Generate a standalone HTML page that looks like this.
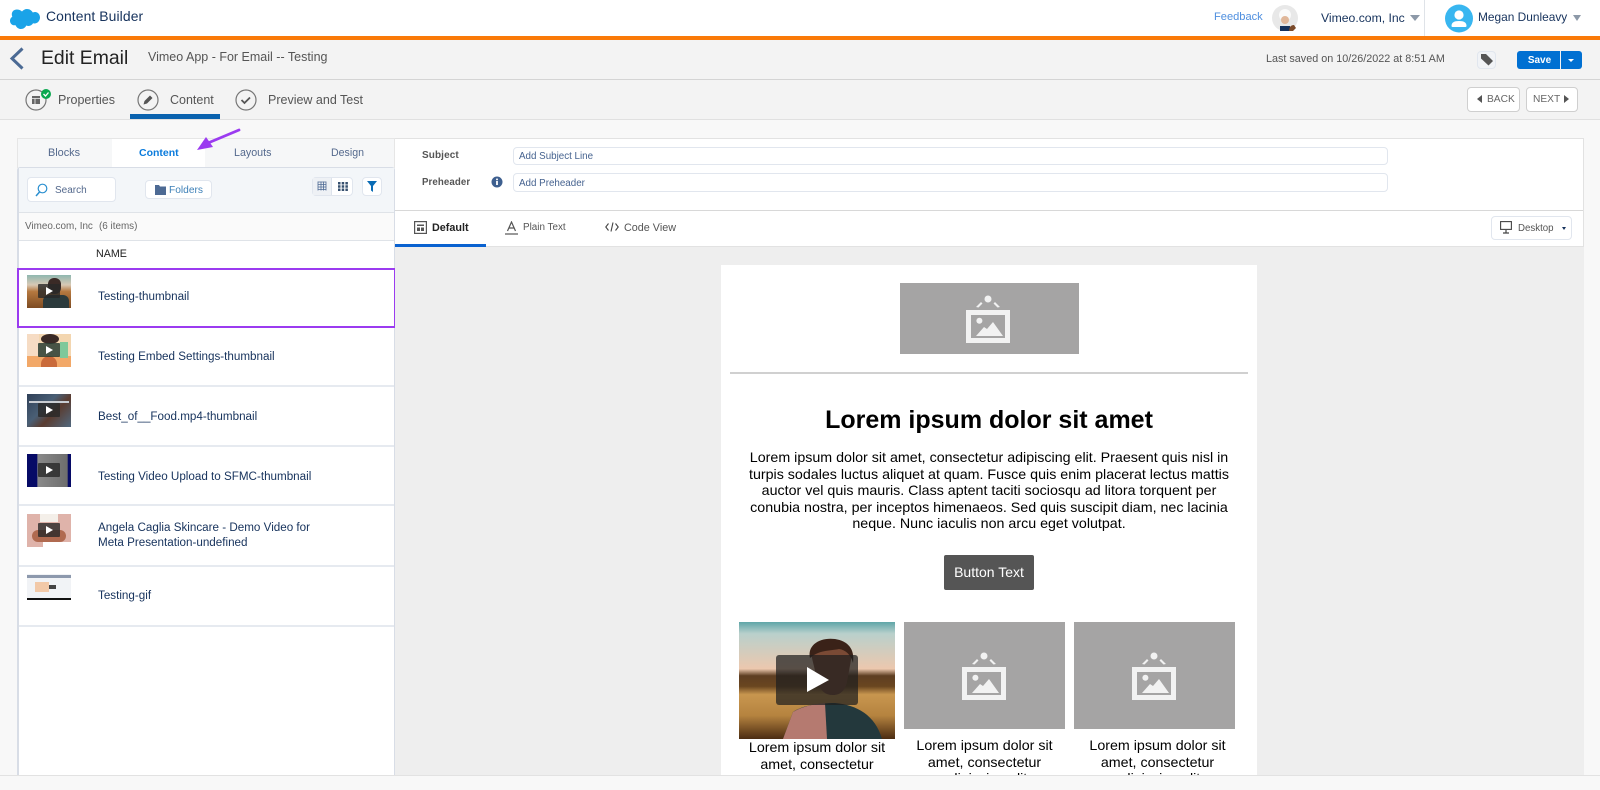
<!DOCTYPE html>
<html><head><meta charset="utf-8"><title>Edit Email</title>
<style>
*{box-sizing:border-box}
html,body{margin:0;padding:0;width:1600px;height:790px;overflow:hidden;background:#f8f8f8;font-family:"Liberation Sans",sans-serif}
#w{position:absolute;left:0;top:0;width:1600px;height:790px;overflow:hidden;filter:blur(.35px)}
.a{position:absolute}
.t{position:absolute;white-space:nowrap;line-height:1}
.btn{position:absolute;background:#fff;border:1px solid #e1e6ee;border-radius:4px}
.row{position:absolute;left:19px;width:375px;border-bottom:2px solid #e6eaf0;background:#fff}
.th{position:absolute;left:27px;width:44px;height:33px;overflow:hidden}
.pl{position:absolute;left:11px;top:9px;width:22px;height:14px;background:rgba(40,40,40,.8);border-radius:1px}
.pl:after{content:"";position:absolute;left:8px;top:3px;border-left:7px solid #fff;border-top:4px solid transparent;border-bottom:4px solid transparent}
.n{position:absolute;left:98px;color:#16325c;font-size:11.650px;line-height:15px;white-space:nowrap}
.ph{position:absolute;background:#a5a4a4}
.c{position:absolute;text-align:center;color:#000;font-size:14.250px;line-height:16.500px}
</style></head><body><div id="w">

<!-- top bar -->
<div class="a" style="left:0;top:0;width:1600px;height:36px;background:#fff"></div>
<div class="a" style="left:0;top:36px;width:1600px;height:4px;background:#fa7a08"></div>
<svg class="a" style="left:10px;top:8px" width="30" height="22" viewBox="0 0 30 22"><path fill="#1aa3e8" d="M12 3.500C13.200 2 15 1 17 1c2.500 0 4.700 1.400 5.800 3.500 1-.4 1.900-.6 2.700-.5 2.700.3 4.500 2.800 4.500 5.500 0 3.200-2.500 6-5.600 6-.5 0-1 0-1.400-.2-.9 1.600-2.600 2.700-4.500 2.700-.8 0-1.500-.2-2.200-.5-.9 2.100-3 3.500-5.300 3.500-2.500 0-4.600-1.600-5.400-3.800-.4.1-.8.100-1.200.1C1.800 17.300 0 15.200 0 12.700c0-1.700.9-3.200 2.300-4C1.900 7.900 1.800 7 1.800 6.300 1.800 3.400 4.100 1.500 6.800 1.500c2 0 3.900.8 5.200 2z"/></svg>
<div class="t" style="left:46px;top:10px;font-size:13.900px;color:#16325c;letter-spacing:.1px">Content Builder</div>
<div class="t" style="left:1214px;top:12px;font-size:11.100px;color:#4f8fdf">Feedback</div>
<svg class="a" style="left:1272px;top:5px" width="26" height="27" viewBox="0 0 26 27"><circle cx="13" cy="13" r="13" fill="#e8e8e8"/><circle cx="13" cy="10" r="6" fill="#fafafa"/><circle cx="13" cy="15" r="4" fill="#e0b79a"/><path d="M8 26v-5h10v5z" fill="#16325c"/><path d="M17 26c0-4 2-6 5-6l2 3-3 3z" fill="#7a4a2a"/></svg>
<div class="t" style="left:1321px;top:12px;font-size:12.200px;color:#16325c">Vimeo.com, Inc</div>
<div class="a" style="left:1410px;top:15px;border-top:6px solid #8d99a8;border-left:5px solid transparent;border-right:5px solid transparent"></div>
<div class="a" style="left:1424px;top:0;width:1px;height:36px;background:#dfe3e8"></div>
<svg class="a" style="left:1445px;top:4px" width="28" height="29" viewBox="0 0 28 29"><circle cx="14" cy="14.500" r="14" fill="#38b6f0"/><circle cx="14" cy="11" r="4.600" fill="#fff"/><path d="M6.500 22c0-3.500 2.500-5 7.500-5s7.500 1.500 7.500 5c0 .5-.5 1-1 1h-13c-.5 0-1-.5-1-1z" fill="#fff"/></svg>
<div class="t" style="left:1478px;top:12px;font-size:11.900px;color:#16325c">Megan Dunleavy</div>
<div class="a" style="left:1573px;top:15px;border-top:6px solid #8d99a8;border-left:4.500px solid transparent;border-right:4.500px solid transparent"></div>

<!-- edit header -->
<div class="a" style="left:0;top:40px;width:1600px;height:80px;background:#f3f3f3"></div>
<div class="a" style="left:0;top:79px;width:1600px;height:1px;background:#d4d4d4"></div>
<div class="a" style="left:0;top:119px;width:1600px;height:1px;background:#e0e0e0"></div>
<svg class="a" style="left:9px;top:46px" width="16" height="25" viewBox="0 0 16 25"><path d="M13.500 2.500 3 12.500l10.500 10" fill="none" stroke="#4b6a94" stroke-width="3"/></svg>
<div class="t" style="left:41px;top:49px;font-size:19.400px;color:#222">Edit Email</div>
<div class="t" style="left:148px;top:51px;font-size:12.500px;color:#555">Vimeo App - For Email -- Testing</div>
<div class="t" style="left:1266px;top:54px;font-size:10.800px;color:#555">Last saved on 10/26/2022 at 8:51 AM</div>
<div class="btn" style="left:1477px;top:51px;width:19px;height:18px;background:#f1f3f6"></div>
<svg class="a" style="left:1480px;top:53px" width="14" height="13" viewBox="0 0 14 13"><path d="M1 1h5l7 7-4.500 4.500L1 5.500z" fill="#555"/></svg>
<div class="a" style="left:1517px;top:51px;width:43px;height:18px;background:#0070d2;border-radius:3px 0 0 3px;color:#fff;font-size:10px;font-weight:bold;line-height:20px;text-align:center;padding-left:2px">Save</div>
<div class="a" style="left:1561px;top:51px;width:21px;height:18px;background:#0070d2;border-radius:0 3px 3px 0"></div>
<div class="a" style="left:1568px;top:59px;border-top:3px solid #fff;border-left:3px solid transparent;border-right:3px solid transparent"></div>

<!-- step tabs -->
<svg class="a" style="left:25px;top:88px" width="28" height="24" viewBox="0 0 28 24"><circle cx="11" cy="12" r="10" fill="#f3f3f3" stroke="#777" stroke-width="1.200"/><rect x="7" y="8" width="8" height="8" fill="#666"/><path d="M7 10.500h8M10 10.500V16" stroke="#f3f3f3" stroke-width=".8"/><circle cx="21" cy="6" r="5" fill="#0aa84f"/><path d="M18.500 6l2 2 3-3.500" fill="none" stroke="#fff" stroke-width="1.300"/></svg>
<div class="t" style="left:58px;top:94px;font-size:12.500px;color:#555">Properties</div>
<svg class="a" style="left:137px;top:89px" width="22" height="22" viewBox="0 0 22 22"><circle cx="11" cy="11" r="10" fill="none" stroke="#777" stroke-width="1.200"/><path d="M6.500 15.500l1-3.500 5.500-5.500 2.500 2.500-5.500 5.500z" fill="#555"/></svg>
<div class="t" style="left:170px;top:94px;font-size:12.500px;color:#555">Content</div>
<div class="a" style="left:130px;top:114px;width:90px;height:5px;background:#0a62ae"></div>
<svg class="a" style="left:235px;top:89px" width="22" height="22" viewBox="0 0 22 22"><circle cx="11" cy="11" r="10" fill="none" stroke="#777" stroke-width="1.200"/><path d="M6.500 11l3 3 5.500-5.500" fill="none" stroke="#555" stroke-width="1.800"/></svg>
<div class="t" style="left:268px;top:94px;font-size:12.500px;color:#555">Preview and Test</div>
<div class="btn" style="left:1467px;top:87px;width:53px;height:25px;border-color:#cfcfcf;background:#fff"></div>
<div class="a" style="left:1477px;top:95px;border-right:5px solid #555;border-top:4px solid transparent;border-bottom:4px solid transparent"></div>
<div class="t" style="left:1487px;top:95px;font-size:10.200px;color:#666">BACK</div>
<div class="btn" style="left:1526px;top:87px;width:52px;height:25px;border-color:#cfcfcf;background:#fff"></div>
<div class="t" style="left:1533px;top:95px;font-size:10.200px;color:#666">NEXT</div>
<div class="a" style="left:1564px;top:95px;border-left:5px solid #555;border-top:4px solid transparent;border-bottom:4px solid transparent"></div>

<!-- left panel tabs -->
<div class="a" style="left:17px;top:138px;width:378px;height:30px;background:#f6f7f8;border:1px solid #e6e6e6;border-bottom:0"></div>
<div class="a" style="left:112px;top:139px;width:93px;height:29px;background:#fff"></div>
<div class="t" style="left:48px;top:148px;font-size:10.900px;color:#54698d">Blocks</div>
<div class="t" style="left:139px;top:148px;font-size:10.500px;font-weight:bold;color:#0a7bdc">Content</div>
<div class="t" style="left:234px;top:148px;font-size:10.700px;color:#54698d">Layouts</div>
<div class="t" style="left:331px;top:148px;font-size:10.600px;color:#54698d">Design</div>

<!-- left panel -->
<div class="a" style="left:17px;top:167px;width:378px;height:608px;background:#fff;border:1px solid #d8dde6;border-left-width:2px;border-bottom:0;border-radius:3px 3px 0 0"></div>
<div class="a" style="left:19px;top:168px;width:375px;height:44px;background:#f3f6f9"></div>
<div class="a" style="left:19px;top:212px;width:375px;height:29px;background:#fafafa;border-top:1px solid #dfe3e8;border-bottom:1px solid #dfe3e8"></div>
<div class="btn" style="left:27px;top:177px;width:89px;height:25px"></div>
<svg class="a" style="left:35px;top:183px" width="13" height="14" viewBox="0 0 13 14"><circle cx="7.500" cy="5.500" r="4.300" fill="none" stroke="#2a8fd0" stroke-width="1.200"/><path d="M4.500 9 1 13" stroke="#2a8fd0" stroke-width="1.500"/></svg>
<div class="t" style="left:55px;top:186px;font-size:10px;color:#54698d">Search</div>
<div class="btn" style="left:145px;top:180px;width:67px;height:19px"></div>
<svg class="a" style="left:155px;top:184px" width="11" height="11" viewBox="0 0 11 11"><path d="M0 1h4l1 1.500h6V11H0z" fill="#4d6a94"/></svg>
<div class="t" style="left:169px;top:186px;font-size:10.200px;color:#3d80b8">Folders</div>
<div class="btn" style="left:312px;top:177px;width:41px;height:19px"></div>
<div class="a" style="left:313px;top:178px;width:19px;height:17px;background:#eef1f5;border-right:1px solid #dde3ec"></div>
<svg class="a" style="left:317px;top:181px" width="10" height="11" viewBox="0 0 10 11"><path d="M1 1h8M1 3.500h8M1 6h8M1 8.500h8M1 0.500v9M4 .5v9M6.500 .5v9M9 .5v9" stroke="#4d6a94" stroke-width=".8" fill="none"/></svg>
<svg class="a" style="left:338px;top:182px" width="10" height="9" viewBox="0 0 10 9"><path d="M0 0h2.500v2.500H0zM3.700 0h2.500v2.500H3.700zM7.400 0h2.500v2.500H7.400zM0 3.300h2.500v2.500H0zM3.700 3.300h2.500v2.500H3.700zM7.400 3.300h2.500v2.500H7.400zM0 6.500h2.500V9H0zM3.700 6.500h2.500V9H3.700zM7.400 6.500h2.500V9H7.400z" fill="#37506f"/></svg>
<div class="btn" style="left:362px;top:177px;width:20px;height:19px"></div>
<svg class="a" style="left:367px;top:181px" width="10" height="11" viewBox="0 0 10 11"><path d="M0 0h10L6 5v6L4 9.500V5z" fill="#0a6cb5"/></svg>
<div class="t" style="left:25px;top:222px;font-size:9.900px;color:#666">Vimeo.com, Inc</div>
<div class="t" style="left:99px;top:222px;font-size:9.900px;color:#666">(6 items)</div>
<div class="t" style="left:96px;top:249px;font-size:10.700px;color:#222">NAME</div>

<!-- rows -->
<div class="row" style="top:327px;height:60px"></div>
<div class="row" style="top:387px;height:60px"></div>
<div class="row" style="top:447px;height:59px"></div>
<div class="row" style="top:506px;height:61px"></div>
<div class="row" style="top:567px;height:60px"></div>
<div class="a" style="left:17px;top:268px;width:379px;height:60px;border:2.500px solid #9b3bf0;background:#fff"></div>

<div class="th" style="top:275px;background:linear-gradient(180deg,#8fb7b0 0,#d8c8b4 30%,#b5783f 50%,#7d4b22 100%)"><div class="a" style="left:21px;top:3px;width:13px;height:16px;background:#3a2a26;border-radius:6px"></div><div class="a" style="left:16px;top:20px;width:26px;height:13px;background:#2b3a3c;border-radius:6px 6px 0 0"></div><div class="pl"></div></div>
<div class="n" style="top:289px">Testing-thumbnail</div>

<div class="th" style="top:334px;background:#f3d6b0"><div class="a" style="left:0;top:0;width:12px;height:33px;background:#f6dcc4"></div><div class="a" style="left:0;top:22px;width:44px;height:11px;background:#f2a868"></div><div class="a" style="left:33px;top:8px;width:8px;height:16px;background:#7fc89a"></div><div class="a" style="left:14px;top:0;width:18px;height:10px;background:#3a2a26;border-radius:50%"></div><div class="a" style="left:14px;top:22px;width:16px;height:11px;background:#c96a3a;border-radius:8px 8px 0 0"></div><div class="pl" style="background:rgba(40,60,50,.85)"></div></div>
<div class="n" style="top:349px">Testing Embed Settings-thumbnail</div>

<div class="th" style="top:394px;background:linear-gradient(135deg,#2f4058,#4a5f75 40%,#5a3c30 60%,#51697f)"><div class="a" style="left:2px;top:7px;width:40px;height:2px;background:#c8ccd2"></div><div class="pl"></div></div>
<div class="n" style="top:409px">Best_of__Food.mp4-thumbnail</div>

<div class="th" style="top:454px;background:linear-gradient(90deg,#060a66 0,#060a66 23%,#8a8a8a 24%,#6d6d6d 92%,#060a66 93%)"><div class="pl"></div></div>
<div class="n" style="top:469px">Testing Video Upload to SFMC-thumbnail</div>

<div class="th" style="top:514px;background:#dfb3aa"><div class="a" style="left:13px;top:0;width:18px;height:8px;background:#f4efe9"></div><div class="a" style="left:5px;top:16px;width:34px;height:12px;background:#b06a50;border-radius:6px"></div><div class="a" style="left:16px;top:28px;width:28px;height:5px;background:#fff"></div><div class="pl"></div></div>
<div class="n" style="top:520px">Angela Caglia Skincare - Demo Video for<br>Meta Presentation-undefined</div>

<div class="th" style="top:574px;height:26px;background:#f1f3f6"><div class="a" style="left:0;top:1px;width:44px;height:3px;background:#8d99ad"></div><div class="a" style="left:8px;top:8px;width:14px;height:10px;background:#f2c9a8"></div><div class="a" style="left:22px;top:11px;width:7px;height:4px;background:#444"></div><div class="a" style="left:0;top:24px;width:44px;height:2px;background:#111"></div></div>
<div class="n" style="top:588px">Testing-gif</div>

<!-- right panel -->
<div class="a" style="left:395px;top:138px;width:1189px;height:109px;background:#fff;border:1px solid #e2e2e2;border-left:0"></div>
<div class="t" style="left:422px;top:151px;font-size:10px;font-weight:bold;color:#555;letter-spacing:.1px">Subject</div>
<div class="btn" style="left:513px;top:147px;width:875px;height:18px"></div>
<div class="t" style="left:519px;top:152px;font-size:9.800px;color:#45628f">Add Subject Line</div>
<div class="t" style="left:422px;top:178px;font-size:9.700px;font-weight:bold;color:#555;letter-spacing:.1px">Preheader</div>
<svg class="a" style="left:491px;top:176px" width="12" height="12" viewBox="0 0 12 12"><circle cx="6" cy="6" r="5.500" fill="#3e5f8f"/><rect x="5.100" y="5" width="1.800" height="4" fill="#fff"/><rect x="5.100" y="2.600" width="1.800" height="1.600" fill="#fff"/></svg>
<div class="btn" style="left:513px;top:173px;width:875px;height:19px"></div>
<div class="t" style="left:519px;top:179px;font-size:9.800px;color:#45628f">Add Preheader</div>
<div class="a" style="left:395px;top:210px;width:1188px;height:1px;background:#d8d8d8"></div>

<svg class="a" style="left:414px;top:221px" width="13" height="13" viewBox="0 0 13 13"><rect x=".6" y=".6" width="11.800" height="11.800" fill="none" stroke="#555" stroke-width="1.200"/><path d="M3 3.500h7V5H3zM3 6.500h3v3.500H3zM7 6.500h3v3.500H7z" fill="#555"/></svg>
<div class="t" style="left:432px;top:223px;font-size:10.800px;font-weight:bold;color:#222">Default</div>
<div class="a" style="left:395px;top:244px;width:91px;height:3px;background:#0a62d0"></div>
<svg class="a" style="left:505px;top:221px" width="13" height="14" viewBox="0 0 13 14"><path d="M2.500 10 6.500 1l4 9M4 7h5" fill="none" stroke="#555" stroke-width="1.200"/><path d="M0 13h13" stroke="#555" stroke-width="1.200"/></svg>
<div class="t" style="left:523px;top:223px;font-size:9.900px;color:#555">Plain Text</div>
<svg class="a" style="left:605px;top:222px" width="14" height="10" viewBox="0 0 14 10"><path d="M3.500 1.500 .8 5l2.700 3.500M10.500 1.500 13.200 5l-2.700 3.500M8 .5 6 9.500" fill="none" stroke="#444" stroke-width="1.100"/></svg>
<div class="t" style="left:624px;top:223px;font-size:10.800px;color:#555">Code View</div>
<div class="btn" style="left:1491px;top:216px;width:81px;height:24px"></div>
<svg class="a" style="left:1500px;top:221px" width="12" height="13" viewBox="0 0 12 13"><rect x=".6" y=".6" width="10.800" height="7.800" fill="none" stroke="#444" stroke-width="1.100"/><path d="M6 9v2.500M3 12h6" stroke="#444" stroke-width="1.200"/></svg>
<div class="t" style="left:1518px;top:224px;font-size:9.700px;color:#555">Desktop</div>
<div class="a" style="left:1562px;top:227px;border-top:3px solid #16325c;border-left:2.500px solid transparent;border-right:2.500px solid transparent"></div>

<!-- canvas -->
<div class="a" style="left:395px;top:247px;width:1189px;height:528px;background:#eee;overflow:hidden">
<div class="a" style="left:326px;top:18px;width:536px;height:510px;background:#fff"></div>
<div class="a" style="left:-395px;top:-247px;width:1600px;height:790px">
 <div class="ph" style="left:900px;top:283px;width:179px;height:71px"></div>
 <svg class="a" style="left:966px;top:295px" width="44" height="48" viewBox="0 0 44 48"><g fill="#f2f2f2"><circle cx="22" cy="4" r="3.500"/><path d="M10 12l5-5 1.500 1.500-4 4zM34 12l-5-5-1.500 1.500 4 4z"/><path fill-rule="evenodd" d="M0 15h44v33H0zM5 20v23h34V20z"/><circle cx="13.400" cy="25.700" r="3"/><path d="M10 41l8-9 3 2 6-7 10 14z"/></g></svg>
 <div class="a" style="left:730px;top:372px;width:518px;height:2px;background:#d0d0d0"></div>
 <div class="c" style="left:721px;top:405px;width:536px;font-size:25px;font-weight:bold;line-height:30px">Lorem ipsum dolor sit amet</div>
 <div class="c" style="left:729px;top:450px;width:520px">Lorem ipsum dolor sit amet, consectetur adipiscing elit. Praesent quis nisl in<br>turpis sodales luctus aliquet at quam. Fusce quis enim placerat lectus mattis<br>auctor vel quis mauris. Class aptent taciti sociosqu ad litora torquent per<br>conubia nostra, per inceptos himenaeos. Sed quis suscipit diam, nec lacinia<br>neque. Nunc iaculis non arcu eget volutpat.</div>
 <div class="a" style="left:944px;top:555px;width:90px;height:35px;background:#555;border-radius:2px;color:#fff;font-size:14px;line-height:35px;text-align:center">Button Text</div>

 <svg class="a" style="left:739px;top:622px" width="156" height="117" viewBox="0 0 156 117">
  <defs>
   <linearGradient id="s" x1="0" y1="0" x2="0" y2="1"><stop offset="0" stop-color="#5fa6a8"/><stop offset=".1" stop-color="#b9d0cc"/><stop offset=".4" stop-color="#ecc8ae"/><stop offset=".46" stop-color="#5e3e22"/><stop offset=".55" stop-color="#6a4620"/><stop offset=".62" stop-color="#c8964f"/><stop offset=".8" stop-color="#b5833f"/><stop offset="1" stop-color="#4c2c12"/></linearGradient>
  </defs>
  <rect width="156" height="117" fill="url(#s)"/>
  <path d="M44 117 54 90c8-6 24-9 42-9 22 2 40 12 47 36z" fill="#23383c"/>
  <path d="M44 117 54 90c8-5 20-8 32-9l2 36z" fill="#b57a70"/>
  <path d="M72 32c0-10 10-15 22-14 12 1 19 8 18 20l-4 22c-2 8-6 13-14 13-8 0-12-4-15-12z" fill="#7a4a35"/>
  <path d="M71 36c-3-13 10-21 25-19 13 2 20 10 18 24-2-8-7-13-14-14-10 2-20 1-29 9z" fill="#3a2218"/>
  <rect x="37" y="33" width="82" height="50" rx="3" fill="#1f1f1f" fill-opacity=".72"/>
  <path d="M68 45 90 58 68 70z" fill="#fff"/>
 </svg>
 <div class="c" style="left:739px;top:740px;width:156px">Lorem ipsum dolor sit<br>amet, consectetur<br>adipiscing elit</div>

 <div class="ph" style="left:904px;top:622px;width:161px;height:107px"></div>
 <svg class="a" style="left:962px;top:652px" width="44" height="48" viewBox="0 0 44 48"><g fill="#f2f2f2"><circle cx="22" cy="4" r="3.500"/><path d="M10 12l5-5 1.500 1.500-4 4zM34 12l-5-5-1.500 1.500 4 4z"/><path fill-rule="evenodd" d="M0 15h44v33H0zM5 20v23h34V20z"/><circle cx="13.400" cy="25.700" r="3"/><path d="M10 41l8-9 3 2 6-7 10 14z"/></g></svg>
 <div class="c" style="left:904px;top:738px;width:161px">Lorem ipsum dolor sit<br>amet, consectetur<br>adipiscing elit</div>

 <div class="ph" style="left:1074px;top:622px;width:161px;height:107px"></div>
 <svg class="a" style="left:1132px;top:652px" width="44" height="48" viewBox="0 0 44 48"><g fill="#f2f2f2"><circle cx="22" cy="4" r="3.500"/><path d="M10 12l5-5 1.500 1.500-4 4zM34 12l-5-5-1.500 1.500 4 4z"/><path fill-rule="evenodd" d="M0 15h44v33H0zM5 20v23h34V20z"/><circle cx="13.400" cy="25.700" r="3"/><path d="M10 41l8-9 3 2 6-7 10 14z"/></g></svg>
 <div class="c" style="left:1077px;top:738px;width:161px">Lorem ipsum dolor sit<br>amet, consectetur<br>adipiscing elit</div>
</div>
</div>
<div class="a" style="left:0;top:775px;width:1600px;height:1px;background:#e2e2e2"></div>

<!-- purple arrow -->
<svg class="a" style="left:190px;top:122px" width="60" height="34" viewBox="0 0 60 34"><path d="M49 8 18 21" stroke="#9b3bf0" stroke-width="2.800" stroke-linecap="round" fill="none"/><path d="M7 28 16 15 23 25z" fill="#9b3bf0"/></svg>

</div></body></html>
